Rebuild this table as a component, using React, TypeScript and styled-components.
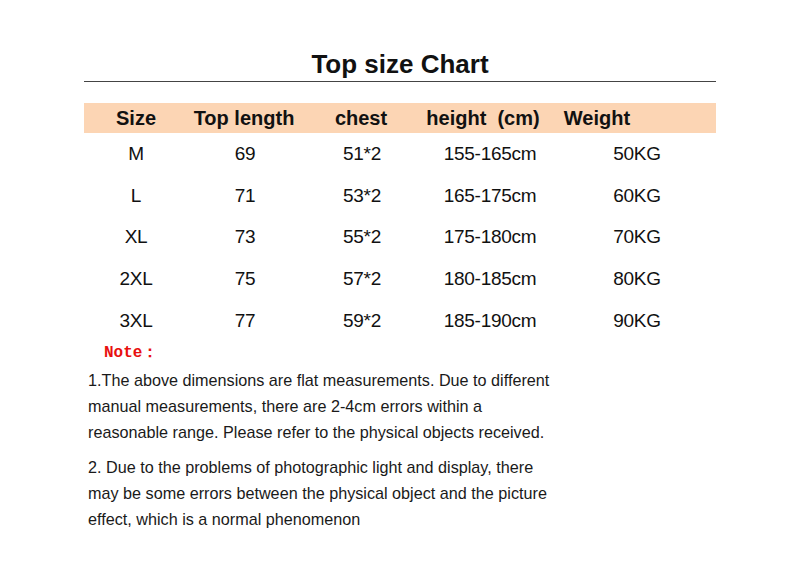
import styled, { createGlobalStyle } from 'styled-components';

const GlobalStyle = createGlobalStyle`
  body {
    margin: 0;
    background: #ffffff;
    font-family: "Liberation Sans", Arial, sans-serif;
    color: #111;
  }
`;

const Page = styled.div`
  width: 632px;
  margin: 0 auto;
  padding-top: 49px;
`;

const Title = styled.h1`
  margin: 0;
  font-size: 26px;
  line-height: 30px;
  font-weight: 700;
  text-align: center;
  padding-bottom: 2px;
  border-bottom: 1.5px solid #444;
`;

const Table = styled.div`
  margin-top: 21px;
  display: flex;
  flex-direction: column;
`;

const headCols = '104px 112px 122px 122px 106px 1fr';
const bodyCols = '104px 114px 120px 136px 158px';

const Row = styled.div<{ $head?: boolean }>`
  display: grid;
  grid-template-columns: ${(p) => (p.$head ? headCols : bodyCols)};
  align-items: center;
  height: ${(p) => (p.$head ? '30px' : '41.8px')};
  background: ${(p) => (p.$head ? '#fcd5b4' : 'transparent')};
  font-size: ${(p) => (p.$head ? '20px' : '19px')};
  font-weight: ${(p) => (p.$head ? 700 : 400)};
  letter-spacing: ${(p) => (p.$head ? '0' : '-0.3px')};
`;

const Cell = styled.span`
  text-align: center;
  white-space: pre;
`;

const Notes = styled.div`
  margin-top: 1px;
  width: 474px;
`;

const NoteLabel = styled.div`
  margin-left: 20px;
  font-family: "Liberation Mono", "Courier New", monospace;
  font-weight: 700;
  font-size: 16px;
  line-height: 20px;
  color: #e8100f;
`;

const Para = styled.p<{ $gap: number }>`
  margin: ${(p) => p.$gap}px 0 0 4px;
  font-size: 16.2px;
  line-height: 26px;
  color: #1a1a1a;
`;

const headers = ['Size', 'Top length', 'chest', 'height  (cm)', 'Weight'];

const rows = [
  ['M', '69', '51*2', '155-165cm', '50KG'],
  ['L', '71', '53*2', '165-175cm', '60KG'],
  ['XL', '73', '55*2', '175-180cm', '70KG'],
  ['2XL', '75', '57*2', '180-185cm', '80KG'],
  ['3XL', '77', '59*2', '185-190cm', '90KG'],
];

export default function App() {
  return (
    <>
      <GlobalStyle />
      <Page>
        <Title>Top size Chart</Title>
        <Table>
          <Row $head>
            {headers.map((h) => (
              <Cell key={h}>{h}</Cell>
            ))}
          </Row>
          {rows.map((r) => (
            <Row key={r[0]}>
              {r.map((v, i) => (
                <Cell key={i}>{v}</Cell>
              ))}
            </Row>
          ))}
        </Table>
        <Notes>
          <NoteLabel>Note：</NoteLabel>
          <Para $gap={4}>
            1.The above dimensions are flat measurements. Due to different manual measurements, there
            are 2-4cm errors within a reasonable range. Please refer to the physical objects received.
          </Para>
          <Para $gap={9}>
            2. Due to the problems of photographic light and display, there may be some errors between
            the physical object and the picture effect, which is a normal phenomenon
          </Para>
        </Notes>
      </Page>
    </>
  );
}
